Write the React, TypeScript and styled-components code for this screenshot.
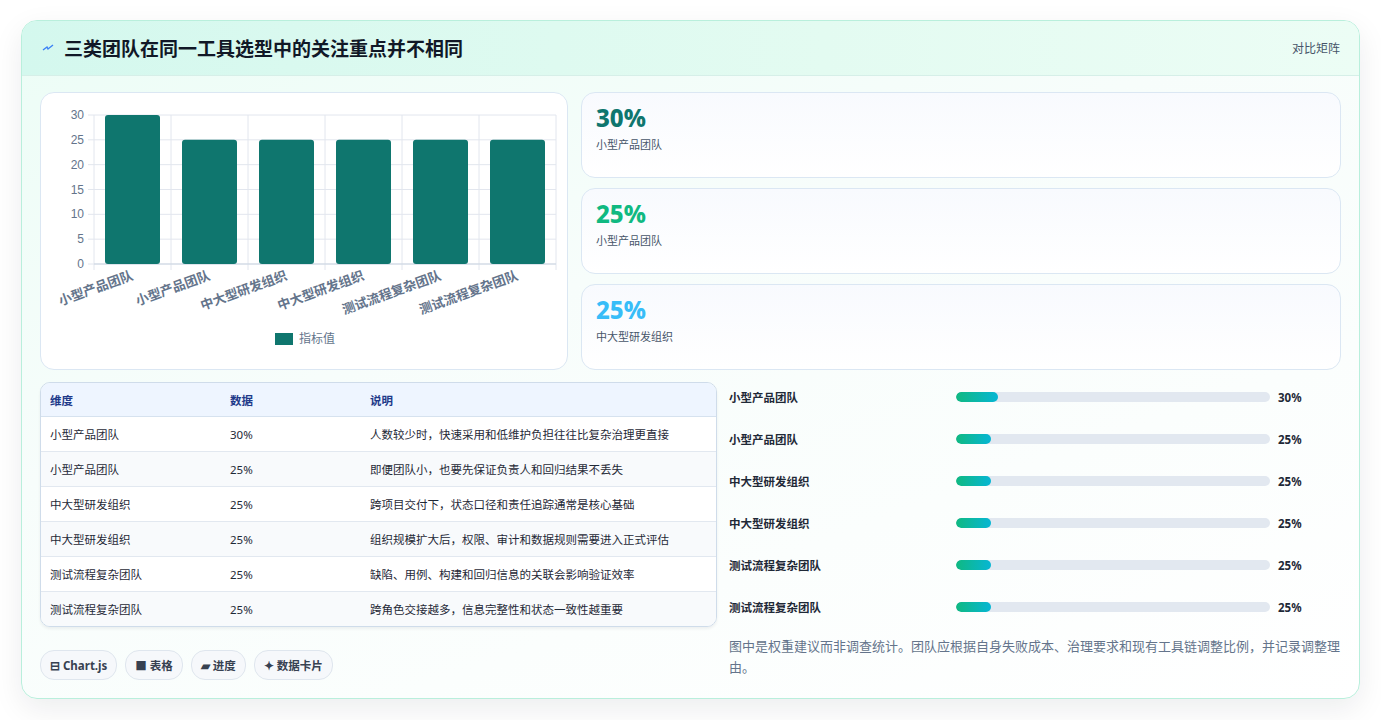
import React from "react";
import styled, { createGlobalStyle } from "styled-components";

const GlobalStyle = createGlobalStyle`
  body {
    margin: 0;
    background: #ffffff;
    font-family: "Noto Sans", "Noto Sans CJK SC", sans-serif;
  }
`;

const Page = styled.div`
  width: 1381px;
  height: 720px;
  padding: 20px 21px 0 21px;
  box-sizing: border-box;
`;

const Panel = styled.div`
  height: 677px;
  border: 1px solid #b9efdc;
  border-radius: 16px;
  overflow: hidden;
  background: linear-gradient(160deg, #ecfdf6 0%, #f7fdfb 40%, #ffffff 100%);
  box-shadow: 0 10px 30px rgba(15, 23, 42, 0.08);
`;

const Header = styled.div`
  height: 54px;
  display: flex;
  align-items: center;
  justify-content: space-between;
  padding: 0 19px 0 20px;
  background: linear-gradient(90deg, #d4f8ee 0%, #e3fbf1 60%, #ecfdf5 100%);
  border-bottom: 1px solid #d6efe8;
`;

const Title = styled.h1`
  margin: 0;
  display: flex;
  align-items: center;
  gap: 10px;
  font-size: 19px;
  font-weight: 700;
  color: #111827;
`;

const Tag = styled.span`
  font-size: 12px;
  color: #475569;
`;

const Body = styled.div`
  padding: 16px 18px 0 18px;
  display: flex;
  flex-direction: column;
  gap: 14px;
`;

const TopRow = styled.div`
  display: grid;
  grid-template-columns: 528px 1fr;
  gap: 13px;
  height: 276px;
`;

const Card = styled.div`
  background: #ffffff;
  border: 1px solid #dbe7f3;
  border-radius: 14px;
`;

const ChartCard = styled(Card)`
  position: relative;
`;

const Stats = styled.div`
  display: flex;
  flex-direction: column;
  gap: 10px;
`;

const StatCard = styled(Card)`
  flex: 1;
  padding: 11px 14px;
  background: linear-gradient(180deg, #f8fafe, #ffffff);
`;

const StatValue = styled.div<{ $c: string }>`
  font-size: 24px;
  font-weight: 800;
  color: ${(p) => p.$c};
  line-height: 28px;
`;

const StatLabel = styled.div`
  margin-top: 4px;
  font-size: 11px;
  color: #475569;
`;

const BottomRow = styled.div`
  display: grid;
  grid-template-columns: 677px 1fr;
  gap: 12px;
`;

const LeftCol = styled.div`
  display: flex;
  flex-direction: column;
  gap: 23px;
`;

const Table = styled.table`
  width: 100%;
  table-layout: fixed;
  border-collapse: separate;
  border-spacing: 0;
  border: 1px solid #cfdcea;
  border-radius: 10px;
  overflow: hidden;
  font-size: 11.5px;
  box-shadow: 0 2px 3px rgba(15, 23, 42, 0.06);
`;

const Th = styled.th<{ $w?: number }>`
  text-align: left;
  font-weight: 700;
  color: #1e3a8a;
  background: #eef5ff;
  height: 33px;
  padding: 0 9px;
  width: ${(p) => (p.$w ? p.$w + "px" : "auto")};
  border-bottom: 1px solid #d6e2ef;
`;

const Td = styled.td<{ $alt: boolean; $last: boolean }>`
  height: 34px;
  padding: 0 9px;
  color: #1f2937;
  background: ${(p) => (p.$alt ? "#f8fafc" : "#ffffff")};
  border-bottom: ${(p) => (p.$last ? "none" : "1px solid #e2e8f0")};
`;

const Chips = styled.div`
  display: flex;
  gap: 8px;
`;

const Chip = styled.span`
  display: inline-flex;
  align-items: center;
  gap: 4px;
  height: 28px;
  padding: 0 9px;
  border: 1px solid #dfe6ee;
  border-radius: 14px;
  background: #f6f8fb;
  font-size: 11.5px;
  font-weight: 700;
  color: #374151;
`;

const Progress = styled.div`
  display: flex;
  flex-direction: column;
`;

const PRow = styled.div`
  display: grid;
  grid-template-columns: 219px 314px 1fr;
  align-items: center;
  column-gap: 8px;
  height: 42px;
  font-size: 11.5px;
  font-weight: 700;
  color: #1f2937;
  &:first-child {
    margin-top: -6px;
  }
`;

const Track = styled.div`
  height: 10px;
  border-radius: 5px;
  background: #e2e8f0;
  overflow: hidden;
`;

const Fill = styled.div`
  height: 100%;
  border-radius: 5px;
  background: linear-gradient(90deg, #10b981, #06b6d4);
`;

const Note = styled.p`
  margin: 8px 0 0 0;
  font-size: 13px;
  line-height: 21px;
  color: #64748b;
`;

const rows = [
  ["小型产品团队", 30, "人数较少时，快速采用和低维护负担往往比复杂治理更直接"],
  ["小型产品团队", 25, "即便团队小，也要先保证负责人和回归结果不丢失"],
  ["中大型研发组织", 25, "跨项目交付下，状态口径和责任追踪通常是核心基础"],
  ["中大型研发组织", 25, "组织规模扩大后，权限、审计和数据规则需要进入正式评估"],
  ["测试流程复杂团队", 25, "缺陷、用例、构建和回归信息的关联会影响验证效率"],
  ["测试流程复杂团队", 25, "跨角色交接越多，信息完整性和状态一致性越重要"],
] as const;

function BarChart() {
  const x0 = 53;
  const x1 = 515;
  const yZero = 171;
  const yTop = 22;
  const step = (x1 - x0) / 6;
  const ticks = [0, 5, 10, 15, 20, 25, 30];
  const yOf = (v: number) => yZero - ((yZero - yTop) * v) / 30;
  return (
    <svg width="528" height="276" style={{ display: "block" }}>
      {ticks.map((t) => (
        <g key={t}>
          <line x1={x0 - 6} x2={x1} y1={yOf(t)} y2={yOf(t)} stroke="#e2e6ee" />
          <text x={x0 - 10} y={yOf(t) + 4} fontSize="12" fill="#64748b" textAnchor="end" fontFamily="Liberation Sans, sans-serif">
            {t}
          </text>
        </g>
      ))}
      {Array.from({ length: 7 }).map((_, i) => (
        <line key={i} x1={x0 + i * step} x2={x0 + i * step} y1={yTop} y2={yZero + 6} stroke="#e2e6ee" />
      ))}
      <line x1={x0} x2={x1} y1={yZero} y2={yZero} stroke="#cbd5e1" />
      {rows.map((r, i) => {
        const bx = x0 + i * step + 11;
        const y = yOf(r[1]);
        return (
          <g key={i}>
            <rect x={bx} y={y} width={55} height={yZero - y} rx={3} fill="#0f766e" />
            <text
              transform={`translate(${x0 + i * step + 40},${yZero + 15}) rotate(-20)`}
              fontSize="13"
              fontWeight="700"
              fill="#64748b"
              textAnchor="end"
              fontFamily="Noto Sans CJK SC, sans-serif"
            >
              {r[0]}
            </text>
          </g>
        );
      })}
      <rect x={234} y={240} width={18} height={12} fill="#0f766e" />
      <text x={258} y={250} fontSize="12" fill="#64748b" fontFamily="Noto Sans CJK SC, sans-serif">
        指标值
      </text>
    </svg>
  );
}

export default function App() {
  const stats = [
    { v: "30%", l: "小型产品团队", c: "#0f766e" },
    { v: "25%", l: "小型产品团队", c: "#10b981" },
    { v: "25%", l: "中大型研发组织", c: "#38bdf8" },
  ];
  return (
    <Page>
      <GlobalStyle />
      <Panel>
        <Header>
          <Title>
            <svg width="12" height="12" viewBox="0 0 12 12">
              <path d="M1 8 L5 5 L6 7 L11 3" stroke="#3b82f6" strokeWidth="1.4" fill="none" />
            </svg>
            三类团队在同一工具选型中的关注重点并不相同
          </Title>
          <Tag>对比矩阵</Tag>
        </Header>
        <Body>
          <TopRow>
            <ChartCard>
              <BarChart />
            </ChartCard>
            <Stats>
              {stats.map((s, i) => (
                <StatCard key={i}>
                  <StatValue $c={s.c}>{s.v}</StatValue>
                  <StatLabel>{s.l}</StatLabel>
                </StatCard>
              ))}
            </Stats>
          </TopRow>
          <BottomRow>
            <LeftCol>
              <Table>
                <thead>
                  <tr>
                    <Th $w={162}>维度</Th>
                    <Th $w={122}>数据</Th>
                    <Th>说明</Th>
                  </tr>
                </thead>
                <tbody>
                  {rows.map((r, i) => (
                    <tr key={i}>
                      {[r[0], r[1] + "%", r[2]].map((c, j) => (
                        <Td key={j} $alt={i % 2 === 1} $last={i === rows.length - 1}>
                          {c}
                        </Td>
                      ))}
                    </tr>
                  ))}
                </tbody>
              </Table>
              <Chips>
                <Chip>⊟ Chart.js</Chip>
                <Chip>■ 表格</Chip>
                <Chip>▰ 进度</Chip>
                <Chip>✦ 数据卡片</Chip>
              </Chips>
            </LeftCol>
            <div>
              <Progress>
                {rows.map((r, i) => (
                  <PRow key={i}>
                    <span>{r[0]}</span>
                    <Track>
                      <Fill style={{ width: `${(r[1] / 30) * 13.4}%` }} />
                    </Track>
                    <span>{r[1]}%</span>
                  </PRow>
                ))}
              </Progress>
              <Note>图中是权重建议而非调查统计。团队应根据自身失败成本、治理要求和现有工具链调整比例，并记录调整理由。</Note>
            </div>
          </BottomRow>
        </Body>
      </Panel>
    </Page>
  );
}
